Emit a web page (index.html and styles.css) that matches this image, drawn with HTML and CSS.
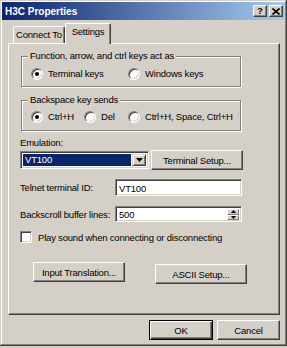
FILE: index.html
```html
<!DOCTYPE html>
<html>
<head>
<meta charset="utf-8">
<link rel="stylesheet" href="styles.css">
</head>
<body>
<div class="window">
  <div class="titlebar">
    <span class="title">H3C Properties</span>
    <div class="caption-btns">
      <span class="cap-btn help">?</span>
      <span class="cap-btn close"><svg width="8" height="7" viewBox="0 0 8 7"><path d="M0.5 0.5 L7.5 6.5 M7.5 0.5 L0.5 6.5" stroke="#000" stroke-width="1.6"/></svg></span>
    </div>
  </div>
  <div class="client">
    <div class="tabs">
      <div class="tab">Connect To</div>
      <div class="tab active">Settings</div>
    </div>
    <div class="panel">
      <fieldset class="group g1">
        <legend>Function, arrow, and ctrl keys act as</legend>
        <div class="opts g1-opts">
          <label class="opt"><span class="radio on"></span>Terminal keys</label>
          <label class="opt"><span class="radio"></span>Windows keys</label>
        </div>
      </fieldset>
      <fieldset class="group g2">
        <legend>Backspace key sends</legend>
        <div class="opts g2-opts">
          <label class="opt"><span class="radio on"></span>Ctrl+H</label>
          <label class="opt"><span class="radio"></span>Del</label>
          <label class="opt"><span class="radio"></span>Ctrl+H, Space, Ctrl+H</label>
        </div>
      </fieldset>
      <div class="emu-label">Emulation:</div>
      <div class="emu-row">
        <div class="combo">
          <span class="combo-text">VT100</span>
          <span class="combo-btn"><svg width="7" height="4" viewBox="0 0 7 4"><polygon points="0,0 7,0 3.5,4" fill="#000"/></svg></span>
        </div>
        <button class="btn term-btn">Terminal Setup...</button>
      </div>
      <div class="field-row tel-row">
        <span class="field-label">Telnet terminal ID:</span>
        <div class="field"><span class="field-text">VT100</span></div>
      </div>
      <div class="field-row back-row">
        <span class="field-label">Backscroll buffer lines:</span>
        <div class="field"><span class="field-text">500</span>
          <span class="spin">
            <span class="spin-btn"><svg width="5" height="3" viewBox="0 0 5 3"><polygon points="2.5,0 5,3 0,3" fill="#000"/></svg></span>
            <span class="spin-btn"><svg width="5" height="3" viewBox="0 0 5 3"><polygon points="0,0 5,0 2.5,3" fill="#000"/></svg></span>
          </span>
        </div>
      </div>
      <label class="check-row"><span class="checkbox"></span>Play sound when connecting or disconnecting</label>
      <div class="btn-row">
        <button class="btn wide">Input Translation...</button>
        <button class="btn wide ascii">ASCII Setup...</button>
      </div>
    </div>
    <div class="footer">
      <button class="btn default ok">OK</button>
      <button class="btn cancel">Cancel</button>
    </div>
  </div>
</div>
</body>
</html>
```
FILE: styles.css
```css
* { box-sizing: border-box; }
html, body { margin: 0; padding: 0; }
body {
  width: 287px;
  height: 348px;
  overflow: hidden;
  background: #D4D0C8;
  font-family: "Liberation Sans", Arial, sans-serif;
  font-size: 9.5px;
  letter-spacing: -0.2px;
  color: #000;
}
.window {
  width: 287px;
  height: 346px;
  padding: 2px;
  background: #D4D0C8;
  box-shadow: inset -1px -1px 0 #404040, inset 1px 1px 0 #D4D0C8, inset -2px -2px 0 #808080, inset 2px 2px 0 #fff;
  display: flex;
  flex-direction: column;
}
.titlebar {
  height: 18px;
  flex: none;
  display: flex;
  align-items: center;
  justify-content: space-between;
  padding: 0 2px 0 3px;
  background: linear-gradient(to right, #0A246A, #A6CAF0);
}
.title {
  color: #fff;
  font-weight: bold;
  font-size: 10px;
  letter-spacing: 0;
}
.caption-btns { display: flex; gap: 2px; }
.cap-btn {
  width: 14px;
  height: 12px;
  display: flex;
  align-items: center;
  justify-content: center;
  background: #D4D0C8;
  border: 1px solid;
  border-color: #fff #404040 #404040 #fff;
  box-shadow: inset -1px -1px 0 #808080;
  font-weight: bold;
  font-size: 9px;
  line-height: 1;
}
.client {
  flex: 1;
  padding: 3px 5px 0 6px;
}
.tabs {
  display: flex;
  align-items: flex-end;
  height: 20px;
  padding-left: 5px;
}
.tab {
  height: 17px;
  line-height: 15px;
  text-align: center;
  border-top: 1px solid #fff;
  border-left: 1px solid #fff;
  border-right: 1px solid #404040;
  border-radius: 2px 2px 0 0;
  box-shadow: inset -1px 0 0 #808080;
  background: #D4D0C8;
}
.tab:first-child { width: 52px; }
.tab.active {
  width: 46px;
  height: 21px;
  line-height: 16px;
  margin-bottom: -1px;
  position: relative;
  z-index: 1;
}
.panel {
  height: 272px;
  border: 1px solid;
  border-color: #fff #404040 #404040 #fff;
  box-shadow: inset -1px -1px 0 #808080;
  padding: 6px 0 0 11px;
}
.group {
  margin: 0 0 0 1px;
  width: 220px;
  min-inline-size: 0;
  padding: 0;
  border: 1px solid #808080;
  box-shadow: 1px 1px 0 #fff, inset 1px 1px 0 #fff;
}
.group legend {
  margin-left: 6px;
  padding: 0 2px;
  line-height: 12px;
  background: #D4D0C8;
}
.opts {
  display: grid;
  align-items: center;
}
.g1-opts { grid-template-columns: 97px auto; padding: 5px 0 6px 9px; }
.g2 { margin-top: 7px; }
.g2-opts { grid-template-columns: 53px 44px auto; padding: 4px 0 7px 9px; }
.opt {
  display: flex;
  align-items: center;
  gap: 5px;
  height: 13px;
  white-space: nowrap;
}
.radio {
  width: 12px;
  height: 12px;
  flex: none;
  border-radius: 50%;
  background: #fff;
  border: 1px solid;
  border-color: #808080 #fff #fff #808080;
  box-shadow: inset 1px 1px 0 #404040, inset -1px -1px 0 #D4D0C8;
  display: inline-flex;
  align-items: center;
  justify-content: center;
}
.radio.on::after {
  content: "";
  width: 4px;
  height: 4px;
  border-radius: 50%;
  background: #000;
}
.emu-label {
  margin-top: 6px;
  line-height: 12px;
}
.emu-row {
  display: flex;
  align-items: center;
  gap: 2px;
  height: 20px;
  margin-top: 1px;
}
.combo {
  width: 129px;
  height: 18px;
  display: flex;
  padding: 2px;
  background: #fff;
  border: 1px solid;
  border-color: #808080 #fff #fff #808080;
  box-shadow: inset 1px 1px 0 #404040, inset -1px -1px 0 #D4D0C8;
}
.combo-text {
  flex: 1;
  background: #0A246A;
  color: #fff;
  padding-left: 2px;
  line-height: 12px;
  margin-right: 1px;
}
.combo-btn {
  width: 14px;
  display: flex;
  align-items: center;
  justify-content: center;
  background: #D4D0C8;
  border: 1px solid;
  border-color: #D4D0C8 #404040 #404040 #D4D0C8;
  box-shadow: inset 1px 1px 0 #fff, inset -1px -1px 0 #808080;
}
.btn {
  font-family: inherit;
  font-size: 9.5px;
  letter-spacing: -0.2px;
  color: #000;
  background: #D4D0C8;
  border: 1px solid;
  border-color: #fff #404040 #404040 #fff;
  box-shadow: inset -1px -1px 0 #808080;
  height: 20px;
  padding: 0;
  margin: 0;
  text-align: center;
}
.term-btn { width: 92px; }
.field-row {
  display: grid;
  grid-template-columns: 95px 127px;
  align-items: center;
}
.tel-row { height: 17px; margin-top: 9px; }
.back-row { height: 15px; margin-top: 10px; }
.field {
  height: 100%;
  display: flex;
  align-items: center;
  background: #fff;
  border: 1px solid;
  border-color: #808080 #fff #fff #808080;
  box-shadow: inset 1px 1px 0 #404040, inset -1px -1px 0 #D4D0C8;
  padding: 2px 2px 1px 3px;
}
.field-text { flex: 1; }
.spin {
  width: 12px;
  height: 100%;
  display: flex;
  flex-direction: column;
}
.spin-btn {
  flex: 1;
  display: flex;
  align-items: center;
  justify-content: center;
  background: #D4D0C8;
  border: 1px solid;
  border-color: #fff #808080 #808080 #fff;
}
.check-row {
  display: flex;
  align-items: center;
  gap: 6px;
  height: 12px;
  margin-top: 10px;
  white-space: nowrap;
}
.checkbox {
  width: 12px;
  height: 12px;
  flex: none;
  background: #fff;
  border: 1px solid;
  border-color: #808080 #fff #fff #808080;
  box-shadow: inset 1px 1px 0 #404040, inset -1px -1px 0 #D4D0C8;
}
.btn-row {
  display: flex;
  align-items: flex-start;
  gap: 30px;
  padding-left: 13px;
  margin-top: 19px;
}
.btn.wide { width: 92px; }
.btn.ascii { margin-top: 2px; }
.footer {
  display: flex;
  justify-content: flex-end;
  gap: 4px;
  margin-top: 5px;
}
.btn.ok { width: 64px; }
.btn.cancel { width: 63px; }
.btn.default {
  border: 1px solid #000;
  box-shadow: inset 1px 1px 0 #fff, inset -1px -1px 0 #404040, inset -2px -2px 0 #808080;
}
```
